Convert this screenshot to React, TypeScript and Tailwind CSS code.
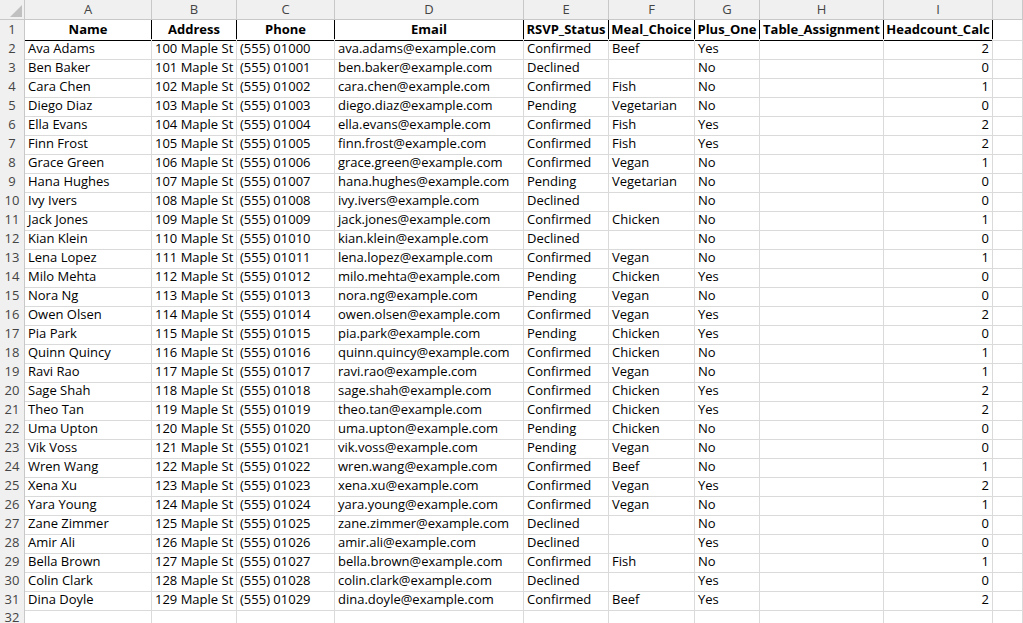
import React from "react";

const data: any[] = [
["Ava Adams","Confirmed","Beef","Yes",2],["Ben Baker","Declined","","No",0],["Cara Chen","Confirmed","Fish","No",1],["Diego Diaz","Pending","Vegetarian","No",0],["Ella Evans","Confirmed","Fish","Yes",2],["Finn Frost","Confirmed","Fish","Yes",2],["Grace Green","Confirmed","Vegan","No",1],["Hana Hughes","Pending","Vegetarian","No",0],["Ivy Ivers","Declined","","No",0],["Jack Jones","Confirmed","Chicken","No",1],["Kian Klein","Declined","","No",0],["Lena Lopez","Confirmed","Vegan","No",1],["Milo Mehta","Pending","Chicken","Yes",0],["Nora Ng","Pending","Vegan","No",0],["Owen Olsen","Confirmed","Vegan","Yes",2],["Pia Park","Pending","Chicken","Yes",0],["Quinn Quincy","Confirmed","Chicken","No",1],["Ravi Rao","Confirmed","Vegan","No",1],["Sage Shah","Confirmed","Chicken","Yes",2],["Theo Tan","Confirmed","Chicken","Yes",2],["Uma Upton","Pending","Chicken","No",0],["Vik Voss","Pending","Vegan","No",0],["Wren Wang","Confirmed","Beef","No",1],["Xena Xu","Confirmed","Vegan","Yes",2],["Yara Young","Confirmed","Vegan","No",1],["Zane Zimmer","Declined","","No",0],["Amir Ali","Declined","","Yes",0],["Bella Brown","Confirmed","Fish","No",1],["Colin Clark","Declined","","Yes",0],["Dina Doyle","Confirmed","Beef","Yes",2],
].map((r: any, i) => {
  const n = String(i).padStart(2, "0");
  const email = (r[0] as string).toLowerCase().replace(" ", ".") + "@example.com";
  return [r[0], `${100 + i} Maple St`, `(555) 010${n}`, email, r[1], r[2], r[3], "", String(r[4]), ""];
});

const letters = ["A","B","C","D","E","F","G","H","I",""];
const heads = ["Name","Address","Phone","Email","RSVP_Status","Meal_Choice","Plus_One","Table_Assignment","Headcount_Calc",""];
const grid = "grid grid-cols-[25px_127px_85px_98px_189px_85px_86px_65px_124px_109px_1fr]";

export default function App() {
  return (
    <div className="w-[1023px] h-[623px] overflow-hidden bg-white text-[13px] text-black" style={{ fontFamily: '"Open Sans", "Noto Sans", sans-serif' }}>
      <div className={`${grid} h-[20px] bg-[#f0f0f0] text-[#444]`}>
        <div className="border-r border-b border-[#c8c8c8] relative">
          <div className="absolute right-[2px] bottom-[2px] w-0 h-0 border-l-[12px] border-l-transparent border-b-[12px] border-b-[#c0c0c0]" />
        </div>
        {letters.map((l, i) => (
          <div key={i} className="border-r border-b border-[#c8c8c8] flex items-center justify-center leading-none">{l}</div>
        ))}
      </div>
      <div className={`${grid} h-[19px]`}>
        <div className="bg-[#f0f0f0] text-[#444] border-r border-b border-[#c8c8c8] flex items-center justify-center">1</div>
        {heads.map((h, i) => (
          <div key={i} className={`flex items-center justify-center font-bold leading-none whitespace-nowrap overflow-hidden ${i < 9 ? "border-r border-b border-black" : "border-r border-b border-[#dadada]"}`}>{h}</div>
        ))}
      </div>
      {data.map((r: any[], ri: number) => (
        <div key={ri} className={`${grid} h-[19px]`}>
          <div className="bg-[#f0f0f0] text-[#444] border-r border-b border-[#c8c8c8] flex items-center justify-center">{ri + 2}</div>
          {r.map((v: any, ci: number) => (
            <div key={ci} className={`border-r border-b border-[#dadada] flex items-center px-[3px] whitespace-nowrap overflow-hidden leading-none ${ci === 8 ? "justify-end" : ""}`}>{v}</div>
          ))}
        </div>
      ))}
      <div className={`${grid} h-[14px]`}>
        <div className="bg-[#f0f0f0] text-[#444] border-r border-[#c8c8c8] flex items-start justify-center leading-[16px]">32</div>
        {letters.map((_, i) => <div key={i} className="border-r border-[#dadada]" />)}
      </div>
    </div>
  );
}
